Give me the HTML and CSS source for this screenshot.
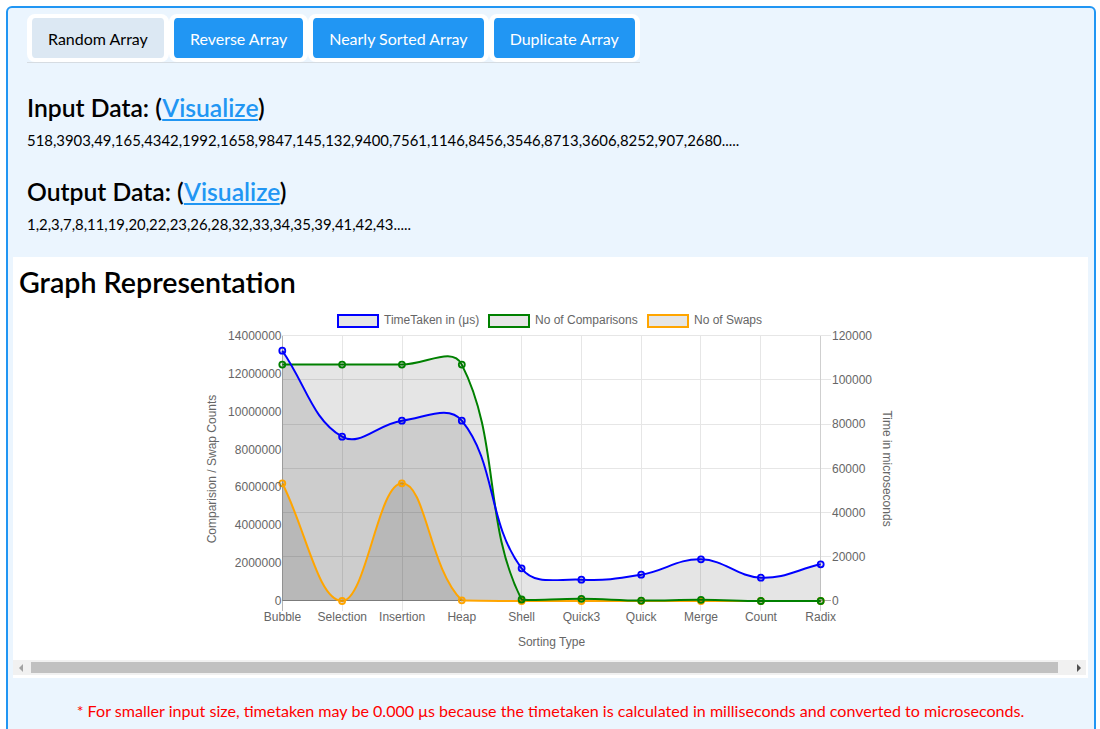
FILE: index.html
```html
<!DOCTYPE html>
<html lang="en">
<head>
<meta charset="utf-8">
<title>Sorting Visualizer</title>
<link rel="stylesheet" href="styles.css">
</head>
<body>
<div class="app">
  <div class="controls">
    <div class="btn-group">
      <button class="btn btn-active">Random Array</button>
      <button class="btn">Reverse Array</button>
      <button class="btn">Nearly Sorted Array</button>
      <button class="btn">Duplicate Array</button>
    </div>
    <h2 class="data-title">Input Data: (<a href="#">Visualize</a>)</h2>
    <p class="data">518,3903,49,165,4342,1992,1658,9847,145,132,9400,7561,1146,8456,3546,8713,3606,8252,907,2680.....</p>
    <h2 class="data-title">Output Data: (<a href="#">Visualize</a>)</h2>
    <p class="data">1,2,3,7,8,11,19,20,22,23,26,28,32,33,34,35,39,41,42,43.....</p>
  </div>

  <section class="graph">
    <h1 class="graph-title">Graph Representation</h1>
    <div class="chart-wrap">
      <svg class="chart" width="1073" height="361" viewBox="13 299 1073 361" xmlns="http://www.w3.org/2000/svg">
        <g class="legend">
          <rect x="338" y="315" width="40" height="12" fill="#e6e6e6" stroke="#0000ff" stroke-width="2"/>
          <text x="384" y="324">TimeTaken in (μs)</text>
          <rect x="489" y="315" width="40" height="12" fill="#e6e6e6" stroke="#008000" stroke-width="2"/>
          <text x="535" y="324">No of Comparisons</text>
          <rect x="648" y="315" width="40" height="12" fill="#e6e6e6" stroke="#ffa500" stroke-width="2"/>
          <text x="694" y="324">No of Swaps</text>
        </g>

        <g class="grid">
          <line x1="282" y1="335.5" x2="831" y2="335.5"/>
          <line x1="282" y1="379.5" x2="831" y2="379.5"/>
          <line x1="282" y1="424.5" x2="831" y2="424.5"/>
          <line x1="282" y1="468.5" x2="831" y2="468.5"/>
          <line x1="282" y1="512.5" x2="831" y2="512.5"/>
          <line x1="282" y1="556.5" x2="831" y2="556.5"/>
          <line x1="342.5" y1="336" x2="342.5" y2="611"/>
          <line x1="402.5" y1="336" x2="402.5" y2="611"/>
          <line x1="461.5" y1="336" x2="461.5" y2="611"/>
          <line x1="521.5" y1="336" x2="521.5" y2="611"/>
          <line x1="581.5" y1="336" x2="581.5" y2="611"/>
          <line x1="641.5" y1="336" x2="641.5" y2="611"/>
          <line x1="700.5" y1="336" x2="700.5" y2="611"/>
          <line x1="760.5" y1="336" x2="760.5" y2="611"/>
        </g>
        <line class="axis-right" x1="820.5" y1="336" x2="820.5" y2="611"/>
        <line class="axis-left" x1="282.5" y1="336" x2="282.5" y2="611"/>
        <line class="axis-bottom" x1="282" y1="600.5" x2="831" y2="600.5"/>

        <g class="fills">
          <path class="fill" d="M282.3,483.3 C306.2,530.4 318.2,601 342.1,601 C366.0,601 377.9,483.4 401.9,483.3 C425.8,483.2 428.9,567.9 461.8,600.3 C476.8,601 497.7,600.9 521.6,601 L820.7,601 L282.3,601 Z"/>
          <path class="fill" d="M282.3,364.6 C306.2,364.6 318.2,364.6 342.1,364.6 C366.0,364.6 377.9,364.6 401.9,364.6 C425.8,364.6 452.3,346.0 461.8,364.6 C500.2,440.0 483.2,524.4 521.6,599.5 C531.1,601 557.5,598.6 581.4,598.8 C605.3,599.0 617.3,600.4 641.2,600.6 C665.1,600.8 677.1,599.7 701.0,599.8 C724.9,599.9 737.0,600.8 760.9,601 C784.8,601 796.8,601 820.7,601 L282.3,601 Z"/>
          <path class="fill" d="M282.3,350.7 C306.2,385.1 312.0,419.1 342.1,436.7 C359.9,447.1 377.6,424.0 401.9,420.7 C425.4,417.6 448.7,404.6 461.8,420.7 C496.6,463.6 487.0,522.3 521.6,568.3 C534.8,585.9 557.3,578.4 581.4,579.7 C605.1,581.0 617.6,578.7 641.2,574.7 C665.5,570.6 677.2,558.7 701.0,559.3 C725.1,559.9 736.7,576.7 760.9,577.7 C784.6,578.7 796.8,569.7 820.7,564.3 L820.7,601 L282.3,601 Z"/>
        </g>

        <g class="series">
          <path class="line orange" d="M282.3,483.3 C306.2,530.4 318.2,601 342.1,601 C366.0,601 377.9,483.4 401.9,483.3 C425.8,483.2 428.9,567.9 461.8,600.3 C476.8,601 497.7,600.9 521.6,601 L820.7,601"/>
          <g class="pts orange">
            <circle cx="282.3" cy="483.3" r="3"/><circle cx="342.1" cy="601" r="3"/><circle cx="401.9" cy="483.3" r="3"/><circle cx="461.8" cy="600.3" r="3"/><circle cx="521.6" cy="601" r="3"/><circle cx="581.4" cy="601" r="3"/><circle cx="641.2" cy="601" r="3"/><circle cx="701" cy="601" r="3"/><circle cx="760.9" cy="601" r="3"/><circle cx="820.7" cy="601" r="3"/>
          </g>

          <path class="line green" d="M282.3,364.6 C306.2,364.6 318.2,364.6 342.1,364.6 C366.0,364.6 377.9,364.6 401.9,364.6 C425.8,364.6 452.3,346.0 461.8,364.6 C500.2,440.0 483.2,524.4 521.6,599.5 C531.1,601 557.5,598.6 581.4,598.8 C605.3,599.0 617.3,600.4 641.2,600.6 C665.1,600.8 677.1,599.7 701.0,599.8 C724.9,599.9 737.0,600.8 760.9,601 C784.8,601 796.8,601 820.7,601"/>
          <g class="pts green">
            <circle cx="282.3" cy="364.6" r="3"/><circle cx="342.1" cy="364.6" r="3"/><circle cx="401.9" cy="364.6" r="3"/><circle cx="461.8" cy="364.6" r="3"/><circle cx="521.6" cy="599.5" r="3"/><circle cx="581.4" cy="598.8" r="3"/><circle cx="641.2" cy="600.6" r="3"/><circle cx="701" cy="599.8" r="3"/><circle cx="760.9" cy="601" r="3"/><circle cx="820.7" cy="601" r="3"/>
          </g>

          <path class="line blue" d="M282.3,350.7 C306.2,385.1 312.0,419.1 342.1,436.7 C359.9,447.1 377.6,424.0 401.9,420.7 C425.4,417.6 448.7,404.6 461.8,420.7 C496.6,463.6 487.0,522.3 521.6,568.3 C534.8,585.9 557.3,578.4 581.4,579.7 C605.1,581.0 617.6,578.7 641.2,574.7 C665.5,570.6 677.2,558.7 701.0,559.3 C725.1,559.9 736.7,576.7 760.9,577.7 C784.6,578.7 796.8,569.7 820.7,564.3"/>
          <g class="pts blue">
            <circle cx="282.3" cy="350.7" r="3"/><circle cx="342.1" cy="436.7" r="3"/><circle cx="401.9" cy="420.7" r="3"/><circle cx="461.8" cy="420.7" r="3"/><circle cx="521.6" cy="568.3" r="3"/><circle cx="581.4" cy="579.7" r="3"/><circle cx="641.2" cy="574.7" r="3"/><circle cx="701" cy="559.3" r="3"/><circle cx="760.9" cy="577.7" r="3"/><circle cx="820.7" cy="564.3" r="3"/>
          </g>
        </g>

        <g class="ticks-left">
          <text x="281.5" y="340">14000000</text>
          <text x="281.5" y="377.9">12000000</text>
          <text x="281.5" y="415.7">10000000</text>
          <text x="281.5" y="453.6">8000000</text>
          <text x="281.5" y="491.4">6000000</text>
          <text x="281.5" y="529.3">4000000</text>
          <text x="281.5" y="567.1">2000000</text>
          <text x="281.5" y="605">0</text>
        </g>
        <g class="ticks-right">
          <text x="832" y="340">120000</text>
          <text x="832" y="384.2">100000</text>
          <text x="832" y="428.3">80000</text>
          <text x="832" y="472.5">60000</text>
          <text x="832" y="516.7">40000</text>
          <text x="832" y="560.8">20000</text>
          <text x="832" y="605">0</text>
        </g>
        <g class="ticks-x">
          <text x="282.5" y="621">Bubble</text>
          <text x="342.3" y="621">Selection</text>
          <text x="402.1" y="621">Insertion</text>
          <text x="461.8" y="621">Heap</text>
          <text x="521.6" y="621">Shell</text>
          <text x="581.4" y="621">Quick3</text>
          <text x="641.2" y="621">Quick</text>
          <text x="701" y="621">Merge</text>
          <text x="760.9" y="621">Count</text>
          <text x="820.7" y="621">Radix</text>
          <text x="551.5" y="645.5">Sorting Type</text>
        </g>
        <text class="axis-title" transform="translate(215.8 469) rotate(-90)">Comparision / Swap Counts</text>
        <text class="axis-title" transform="translate(882.6 468.5) rotate(90)">Time in microseconds</text>
      </svg>
    </div>
    <div class="scrollbar">
      <div class="sb-btn"><span class="tri-left"></span></div>
      <div class="sb-track"><div class="sb-thumb"></div></div>
      <div class="sb-btn"><span class="tri-right"></span></div>
    </div>
  </section>

  <p class="note">* For smaller input size, timetaken may be 0.000 μs because the timetaken is calculated in milliseconds and converted to microseconds.</p>
</div>
</body>
</html>
```

FILE: styles.css
```css
* { box-sizing: border-box; }

html, body {
  margin: 0;
  padding: 0;
  background: #ffffff;
}

body {
  font-family: Lato, "Noto Sans", sans-serif;
  color: #000;
  overflow: hidden;
}

.app {
  margin: 6px 4px 0 6px;
  border: 2px solid #2196f3;
  border-radius: 6px;
  background: #ebf5fe;
  padding: 0 6px 40px 5px;
  min-height: 760px;
}

.controls {
  padding: 6px 14px 0;
}

.btn-group {
  display: inline-flex;
  border-bottom: 1px solid #d6dce2;
}

.btn {
  font-family: inherit;
  font-size: 16px;
  height: 48px;
  padding: 0 16px;
  margin: 0;
  border-style: solid;
  border-color: #ffffff;
  border-width: 4px 5px;
  border-radius: 8px;
  background: #2196f3;
  background-clip: padding-box;
  color: #ffffff;
  cursor: pointer;
}

.btn-active {
  background-color: #dce8f3;
  color: #000;
}

.data-title {
  font-size: 24.7px;
  font-weight: 600;
  line-height: 29px;
  margin: 30px 0 7px;
}

.data-title + .data + .data-title {
  margin-top: 0;
}

.data-title a {
  color: #2196f3;
  text-decoration: underline;
}

.data {
  font-size: 14.9px;
  line-height: 22px;
  margin: 0 0 26px;
}

.controls .data:last-child {
  margin-bottom: 22px;
}

.graph {
  background: #ffffff;
  padding: 8px 2px 3px 0;
}

.graph-title {
  font-size: 28.6px;
  font-weight: 600;
  line-height: 34px;
  margin: 0 0 0 6px;
}

.chart-wrap {
  height: 361px;
}

.chart {
  display: block;
}

.chart text {
  font-family: "Liberation Sans", Arial, sans-serif;
  font-size: 12px;
  fill: #666666;
}

.ticks-left text { text-anchor: end; }
.ticks-right text { text-anchor: start; }
.ticks-x text { text-anchor: middle; }
.chart .axis-title { text-anchor: middle; }

.grid line {
  stroke: #e6e6e6;
  stroke-width: 1;
}

.axis-right { stroke: #cfcfcf; stroke-width: 1; }
.axis-left { stroke: #b5b5b5; stroke-width: 1; }
.axis-bottom { stroke: #ababab; stroke-width: 1; }

.fill {
  fill: rgba(0, 0, 0, 0.1);
  stroke: none;
}

.line {
  fill: none;
  stroke-width: 2;
}

.line.blue { stroke: #0000ff; }
.line.green { stroke: #008000; }
.line.orange { stroke: #ffa500; }

.pts circle {
  fill: rgba(0, 0, 0, 0.1);
  stroke-width: 1.8;
}

.pts.blue circle { stroke: #0000ff; }
.pts.green circle { stroke: #008000; }
.pts.orange circle { stroke: #ffa500; }

.scrollbar {
  display: flex;
  height: 15px;
  background: #f1f1f1;
}

.sb-btn {
  width: 15px;
  display: flex;
  align-items: center;
  justify-content: center;
}

.tri-left {
  width: 0;
  height: 0;
  border-top: 4px solid transparent;
  border-bottom: 4px solid transparent;
  border-right: 4px solid #a3a3a3;
}

.tri-right {
  width: 0;
  height: 0;
  border-top: 4px solid transparent;
  border-bottom: 4px solid transparent;
  border-left: 4px solid #505050;
}

.sb-track {
  flex: 1;
  display: flex;
  align-items: center;
}

.sb-thumb {
  margin-left: 3px;
  width: 1027px;
  height: 11px;
  background: #c1c1c1;
}

.note {
  margin: 22px 0 0;
  text-align: center;
  color: #ff0000;
  font-size: 16.1px;
  line-height: 22px;
}
```
